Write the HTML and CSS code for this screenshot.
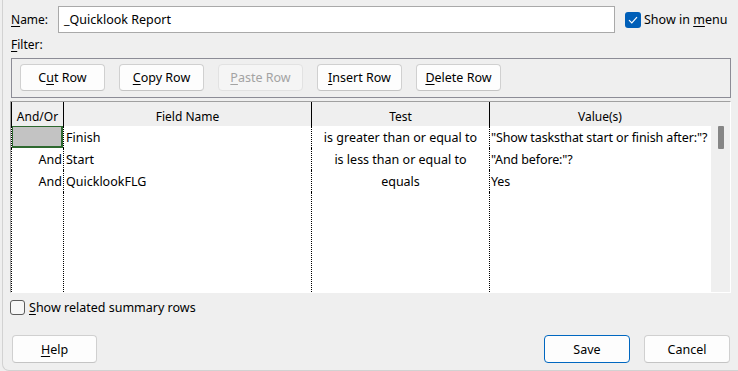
FILE: index.html
```html
<!DOCTYPE html>
<html lang="en">
<head>
  <meta charset="UTF-8" />
  <title>Filter Definition</title>
  <link rel="stylesheet" href="styles.css">
</head>
<body>
  <div class="dialog">
    <div class="name-row">
      <span class="lbl-name"><u>N</u>ame:</span>
      <div class="text-input">_Quicklook Report</div>
      <span class="check checked">
        <svg width="10" height="8" viewBox="0 0 10 8"><path d="M1 4.2 L3.8 7 L9 1.2" fill="none" stroke="#fff" stroke-width="1.2"/></svg>
      </span>
      <span class="check-label">Show in <u>m</u>enu</span>
    </div>

    <div class="filter-label"><u>F</u>ilter:</div>

    <div class="toolbar">
      <button class="btn">C<u>u</u>t Row</button>
      <button class="btn"><u>C</u>opy Row</button>
      <button class="btn disabled"><u>P</u>aste Row</button>
      <button class="btn"><u>I</u>nsert Row</button>
      <button class="btn"><u>D</u>elete Row</button>
    </div>

    <div class="grid">
      <table class="criteria">
        <colgroup>
          <col class="c-andor">
          <col class="c-field">
          <col class="c-test">
          <col class="c-value">
        </colgroup>
        <thead>
          <tr>
            <th>And/Or</th>
            <th>Field Name</th>
            <th>Test</th>
            <th>Value(s)</th>
          </tr>
        </thead>
        <tbody>
          <tr>
            <td class="andor"><div class="selected"></div></td>
            <td>Finish</td>
            <td class="test">is greater than or equal to</td>
            <td class="value">"Show tasksthat start or finish after:"?</td>
          </tr>
          <tr>
            <td class="andor">And</td>
            <td>Start</td>
            <td class="test">is less than or equal to</td>
            <td class="value">"And before:"?</td>
          </tr>
          <tr>
            <td class="andor">And</td>
            <td>QuicklookFLG</td>
            <td class="test">equals</td>
            <td class="value">Yes</td>
          </tr>
          <tr class="filler">
            <td></td><td></td><td></td><td></td>
          </tr>
        </tbody>
      </table>
      <div class="vscroll"><div class="thumb"></div></div>
    </div>

    <div class="summary-row">
      <span class="check"></span>
      <span class="check-label"><u>S</u>how related summary rows</span>
    </div>

    <div class="footer">
      <button class="btn help"><u>H</u>elp</button>
      <div class="spacer"></div>
      <button class="btn default">Save</button>
      <button class="btn">Cancel</button>
    </div>
  </div>
</body>
</html>
```

FILE: styles.css
```css
body {
  margin: 0;
  background-color: #efefef;
  color: #000;
  font-family: "Noto Sans", "Open Sans", sans-serif;
  font-size: 12px;
}

.dialog {
  box-sizing: border-box;
  width: 736px;
  height: 371px;
  margin-left: 2px;
  padding: 6px 7px 0 8px;
  border-left: 1px solid #d2d2d2;
  border-bottom: 1px solid #d2d2d2;
  border-bottom-left-radius: 7px;
  display: flex;
  flex-direction: column;
}

u {
  text-underline-offset: 2px;
}

/* name row */
.name-row {
  display: flex;
  align-items: center;
  height: 27px;
}

.lbl-name {
  width: 47px;
}

.text-input {
  box-sizing: border-box;
  width: 557px;
  height: 27px;
  padding-left: 5px;
  line-height: 25px;
  background: #fff;
  border: 1px solid #a9a9a9;
  font-size: 12.5px;
}

.check {
  box-sizing: border-box;
  width: 16px;
  height: 16px;
  border-radius: 3px;
  display: flex;
  align-items: center;
  justify-content: center;
}

.name-row .check {
  margin-left: 10px;
}

.check.checked {
  background: #005fb8;
}

.check-label {
  margin-left: 3px;
  font-size: 12.5px;
}

.filter-label {
  margin-top: 4px;
  line-height: 16px;
}

/* button bar */
.toolbar {
  margin-top: 5px;
  height: 40px;
  box-sizing: border-box;
  border: 1px solid #8c8c96;
  padding: 5px 8px 0;
  display: flex;
  gap: 14px;
}

.btn {
  box-sizing: border-box;
  width: 85px;
  height: 27px;
  padding: 0;
  background: #fdfdfd;
  border: 1px solid #d0d0d0;
  border-bottom-color: #c4c4c4;
  border-radius: 4px;
  font-family: inherit;
  font-size: 12.5px;
  color: #000;
}

.btn.disabled {
  background: #f5f5f5;
  border-color: #e2e2e2;
  color: #a3a3a3;
}

.btn.default {
  border: 1px solid #0067c0;
}

/* criteria grid */
.grid {
  margin-top: 3px;
  margin-left: -1px;
  height: 192px;
  box-sizing: border-box;
  border-top: 1px solid #a0a0a0;
  border-left: 1px solid #a0a0a0;
  border-right: 1px solid #fff;
  border-bottom: 1px solid #fff;
  display: flex;
}

.criteria {
  width: 699px;
  height: 100%;
  border-collapse: collapse;
  table-layout: fixed;
  background: #fff;
}

.c-andor { width: 52px; }
.c-field { width: 248px; }
.c-test { width: 178px; }
.c-value { width: 221px; }

.criteria th {
  height: 24px;
  padding: 5px 0 0;
  box-sizing: border-box;
  background: #efefef;
  font-weight: normal;
  text-align: center;
  border-right: 1px solid #000;
  white-space: nowrap;
}

.criteria th:first-child {
  border-left: 1px solid #000;
}

.criteria th:last-child {
  border-right: none;
}

.criteria td {
  height: 22px;
  padding: 0 0 0 2px;
  box-sizing: border-box;
  border-right: 1px dotted #000;
  white-space: nowrap;
  overflow: hidden;
  font-size: 12.5px;
}

.criteria td:first-child {
  border-left: 1px dotted #000;
}

.criteria td:last-child {
  border-right: none;
}

.criteria td.andor {
  text-align: right;
  padding: 0 1px 0 0;
  position: relative;
}

.criteria td.test {
  text-align: center;
  padding: 0;
}

.criteria td.value {
  letter-spacing: -0.12px;
  padding-left: 1px;
}

.criteria .filler td {
  height: auto;
}

.selected {
  position: absolute;
  left: -1px;
  top: -1px;
  right: 0;
  bottom: 0;
  background: #c3c3c3;
  border: 2px solid #2e6930;
}

.vscroll {
  flex: 1;
  background: #efefef;
  position: relative;
}

.thumb {
  position: absolute;
  left: 7px;
  top: 24px;
  width: 6px;
  height: 23px;
  background: #868686;
  border-radius: 1px;
}

/* bottom */
.summary-row {
  margin-top: 6px;
  margin-left: -1px;
  display: flex;
  align-items: center;
}

.summary-row .check {
  width: 15px;
  height: 15px;
  border: 1px solid #5c5c5c;
  background: #f6f6f6;
}

.summary-row .check-label {
  margin-left: 4px;
}

.footer {
  margin-top: 19px;
  display: flex;
  gap: 14px;
  padding-right: 1px;
}

.footer .btn {
  width: 86px;
  height: 28px;
}

.footer .btn.help {
  width: 85px;
  margin-left: 1px;
}

.spacer {
  flex: 1;
}
```
